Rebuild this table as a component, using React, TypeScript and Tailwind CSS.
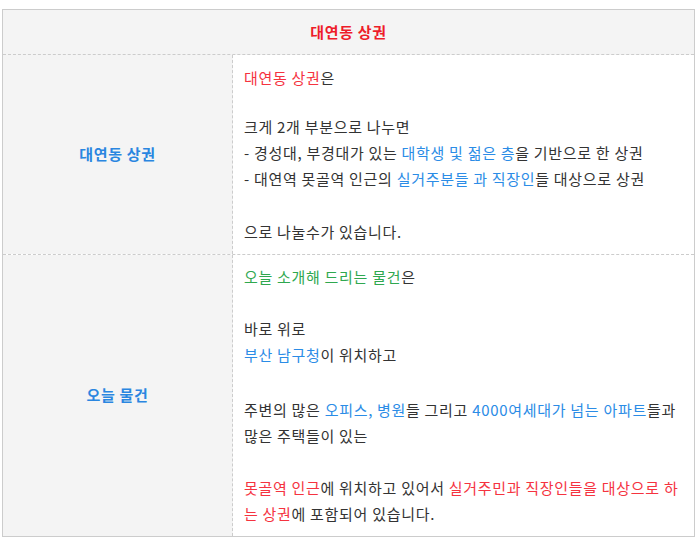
import React from "react";

const R = ({ children }: { children: React.ReactNode }) => (
  <span className="text-[#f5333f]">{children}</span>
);
const B = ({ children }: { children: React.ReactNode }) => (
  <span className="text-[#2b8ce6]">{children}</span>
);
const G = ({ children }: { children: React.ReactNode }) => (
  <span className="text-[#2fa84f]">{children}</span>
);

export default function App() {
  return (
    <div
      className="bg-white w-[698px] h-[547px] pt-[9px] pl-[2px]"
      style={{ fontFamily: '"Noto Sans CJK KR", "Noto Sans", sans-serif' }}
    >
      <div className="w-[693px] border border-[#cccccc] text-[15px] text-[#333333] tracking-[0.7px]">
        <div className="h-[45px] bg-[#f4f4f4] flex items-center justify-center font-bold text-[#ee1c2a] border-b border-dashed border-[#cccccc]">
          대연동 상권
        </div>
        <div className="flex border-b border-dashed border-[#cccccc]">
          <div className="w-[230px] shrink-0 bg-[#f4f4f4] border-r border-dashed border-[#cccccc] flex items-center justify-center font-bold text-[#2a86e0]">
            대연동 상권
          </div>
          <div className="flex-1 pl-[11px] pr-[10px] pt-[10px] pb-[9px] leading-[26px] break-all">
            <div>
              <R>대연동 상권</R>은
            </div>
            <div className="h-[23px]" />
            <div>크게 2개 부분으로 나누면</div>
            <div>- 경성대, 부경대가 있는 <B>대학생 및 젊은 층</B>을 기반으로 한 상권</div>
            <div>- 대연역 못골역 인근의 <B>실거주분들 과 직장인</B>들 대상으로 상권</div>
            <div className="h-[27px]" />
            <div>으로 나눌수가 있습니다.</div>
          </div>
        </div>
        <div className="flex">
          <div className="w-[230px] shrink-0 bg-[#f4f4f4] border-r border-dashed border-[#cccccc] flex items-center justify-center font-bold text-[#2a86e0]">
            오늘 물건
          </div>
          <div className="flex-1 pl-[11px] pr-[10px] pt-[9px] pb-[9px] leading-[26px] break-all">
            <div>
              <G>오늘 소개해 드리는 물건</G>은
            </div>
            <div className="h-[26px]" />
            <div>바로 위로</div>
            <div>
              <B>부산 남구청</B>이 위치하고
            </div>
            <div className="h-[29px]" />
            <div>
              주변의 많은 <B>오피스, 병원</B>들 그리고 <B>4000여세대가 넘는 아파트</B>들과 많은 주택들이 있는
            </div>
            <div className="h-[26px]" />
            <div>
              <R>못골역 인근</R>에 위치하고 있어서 <R>실거주민과 직장인들을 대상으로 하는 상권</R>에 포함되어 있습니다.
            </div>
          </div>
        </div>
      </div>
    </div>
  );
}
